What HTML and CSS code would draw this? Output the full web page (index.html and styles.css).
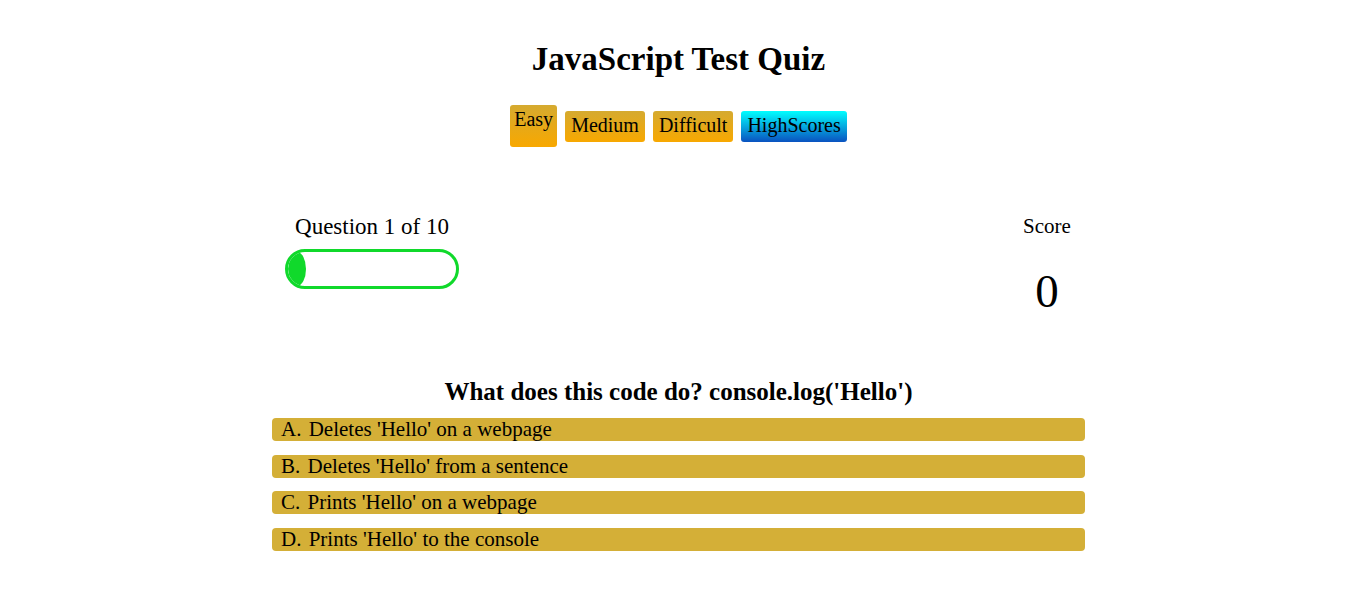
FILE: index.html
```html
<!DOCTYPE html>
<html lang="en">
<head>
<meta charset="utf-8">
<title>JavaScript Test Quiz</title>
<link rel="stylesheet" href="styles.css">
</head>
<body>
<main class="page">
  <h1 class="title">JavaScript Test Quiz</h1>
  <nav class="levels">
    <button class="btn btn-level btn-active">Easy</button>
    <button class="btn btn-level">Medium</button>
    <button class="btn btn-level">Difficult</button>
    <button class="btn btn-scores">HighScores</button>
  </nav>
  <section class="stats">
    <div class="progress-block">
      <p class="progress-label">Question 1 of 10</p>
      <div class="progress-bar"><div class="progress-fill"></div></div>
    </div>
    <div class="score-block">
      <p class="score-label">Score</p>
      <p class="score-value">0</p>
    </div>
  </section>
  <section class="question">
    <h2 class="question-text">What does this code do? console.log('Hello')</h2>
    <div class="answers">
      <div class="answer"><span class="letter">A.</span> Deletes 'Hello' on a webpage</div>
      <div class="answer"><span class="letter">B.</span> Deletes 'Hello' from a sentence</div>
      <div class="answer"><span class="letter">C.</span> Prints 'Hello' on a webpage</div>
      <div class="answer"><span class="letter">D.</span> Prints 'Hello' to the console</div>
    </div>
  </section>
</main>
</body>
</html>
```
FILE: styles.css
```css
html, body {
  background: #ffffff;
}
body {
  margin: 0 12px 0 8px;
  font-family: "Liberation Serif", "DejaVu Serif", serif;
  color: #000;
}
.page {
  width: 813px;
  margin: 0 auto;
  display: flex;
  flex-direction: column;
}
.title {
  margin: 37px 0 0;
  font-size: 33px;
  line-height: 44px;
  font-weight: bold;
  text-align: center;
}
.levels {
  margin-top: 24px;
  display: flex;
  justify-content: center;
  align-items: center;
  gap: 8px;
}
.btn {
  font-family: inherit;
  font-size: 20px;
  line-height: 24px;
  color: #000;
  border: none;
  border-radius: 3px;
  padding: 2px 6px 5px;
  height: 31px;
}
.btn-level {
  background: linear-gradient(#d5aa30, #f8a800);
}
.btn-active {
  height: 42px;
  padding: 2px 4px 16px;
}
.btn-scores {
  background: linear-gradient(#00ffff, #0a52c0);
}
.stats {
  margin-top: 62px;
  padding-left: 13px;
  display: flex;
  justify-content: space-between;
  align-items: flex-start;
}
.progress-block {
  display: flex;
  flex-direction: column;
  align-items: center;
  width: 174px;
}
.progress-label, .score-label {
  margin: 2px 0 0;
  font-size: 21px;
  line-height: 30px;
}
.progress-label {
  font-size: 23px;
  margin-top: 3px;
}
.progress-bar {
  margin-top: 7px;
  width: 174px;
  height: 40px;
  box-sizing: border-box;
  border: 3px solid #10d92b;
  border-radius: 20px;
  overflow: hidden;
}
.progress-fill {
  width: 18px;
  height: 100%;
  background: #10d92b;
  border-radius: 50%;
}
.score-block {
  width: 60px;
  margin-right: 8px;
  display: flex;
  flex-direction: column;
  align-items: center;
}
.score-value {
  margin: 28px 0 0;
  font-size: 47px;
  line-height: 44px;
}
.question {
  margin-top: 64px;
}
.question-text {
  margin: 0;
  font-size: 25px;
  line-height: 30px;
  font-weight: bold;
  text-align: center;
}
.answers {
  margin-top: 11px;
  display: flex;
  flex-direction: column;
  gap: 13.5px;
}
.answer {
  background: #d4af37;
  border-radius: 4px;
  height: 23px;
  font-size: 21px;
  line-height: 23px;
  padding-left: 9px;
}
.letter {
  margin-right: 2px;
}
```
